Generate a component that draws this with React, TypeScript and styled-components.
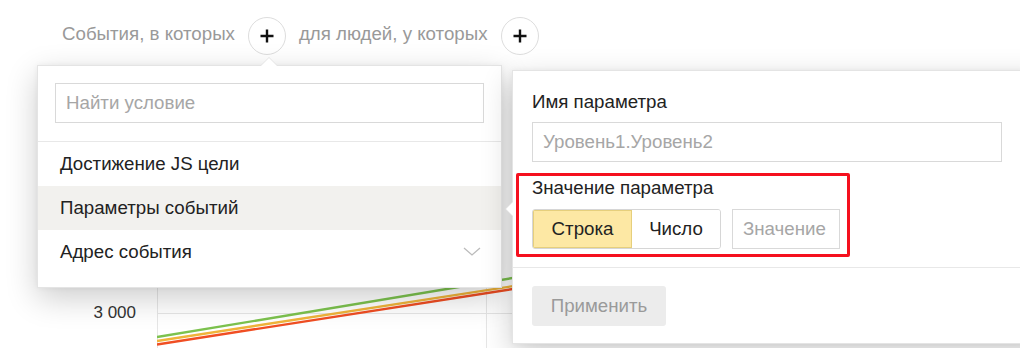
import React from "react";
import styled, { createGlobalStyle } from "styled-components";

const Global = createGlobalStyle`
  html, body { margin: 0; padding: 0; background: #fff; }
  body { font-family: "Liberation Sans", Arial, sans-serif; color: #222; }
  * { box-sizing: border-box; }
`;

const FS = "18.7px";

const Page = styled.div`
  position: relative;
  width: 1020px;
  height: 348px;
  overflow: hidden;
  background: #fff;
`;

const FilterRow = styled.div`
  display: flex;
  align-items: center;
  gap: 13px;
  height: 70px;
  padding-left: 62px;
`;

const FilterText = styled.span`
  font-size: ${FS};
  color: #999;
  margin-top: -3px;
`;

const PlusButton = styled.button`
  width: 38px;
  height: 38px;
  border-radius: 50%;
  border: 1px solid #ddd;
  background: #fff;
  display: flex;
  align-items: center;
  justify-content: center;
  padding: 0;
  margin-top: 1px;
`;

const ChartArea = styled.div`
  display: flex;
  height: 278px;
`;

const YAxis = styled.div`
  width: 157px;
  padding-top: 233px;
  padding-right: 21px;
  text-align: right;
  font-size: 17px;
  color: #333;
`;

const Plot = styled.svg`
  display: block;
  flex: 1;
  height: 278px;
`;

const Popover = styled.div`
  position: absolute;
  background: #fff;
  border: 1px solid #e4e4e4;
  box-shadow: 0 10px 30px rgba(0, 0, 0, 0.2), 0 0 6px rgba(0, 0, 0, 0.05);
`;

const ConditionsPopover = styled(Popover)`
  left: 37px;
  top: 65px;
  width: 465px;
  padding-bottom: 13px;
  &::before,
  &::after {
    content: "";
    position: absolute;
    left: 222px;
    border: 9px solid transparent;
    border-top: 0;
  }
  &::before {
    top: -9px;
    border-bottom-color: #e4e4e4;
  }
  &::after {
    top: -8px;
    border-bottom-color: #fff;
  }
`;

const SearchBox = styled.div`
  padding: 17px 17px 18px 17px;
  border-bottom: 1px solid #e8e8e8;
`;

const TextField = styled.div<{ $w?: number }>`
  height: 40px;
  border: 1px solid #d9d9d9;
  display: flex;
  align-items: center;
  padding-left: 10px;
  font-size: ${FS};
  color: #a6a6a6;
  white-space: nowrap;
  ${(p) => (p.$w ? `width: ${p.$w}px;` : "")}
`;

const Item = styled.div<{ $active?: boolean }>`
  height: 44px;
  display: flex;
  align-items: center;
  justify-content: space-between;
  padding: 0 20px 0 22px;
  font-size: ${FS};
  color: #222;
  background: ${(p) => (p.$active ? "#f2f1ee" : "#fff")};
`;

const ParamPopover = styled(Popover)`
  left: 512px;
  top: 70px;
  width: 540px;
  &::before,
  &::after {
    content: "";
    position: absolute;
    top: 130px;
    border: 8px solid transparent;
    border-left: 0;
  }
  &::before {
    left: -8px;
    border-right-color: #e0e0e0;
  }
  &::after {
    left: -7px;
    border-right-color: #fff;
  }
`;

const ParamBody = styled.div`
  padding: 21px 20px 10px 19px;
  border-bottom: 1px solid #e8e8e8;
`;

const Label = styled.div`
  font-size: ${FS};
  line-height: 20px;
  color: #222;
`;

const NameField = styled(TextField)`
  width: 470px;
  margin-top: 10px;
`;

const Highlight = styled.div`
  display: inline-flex;
  flex-direction: column;
  gap: 11px;
  margin: 11px 0 0 -16px;
  padding: 2px 7px 5px 13px;
  border: 3px solid #f5101e;
  border-radius: 2px;
`;

const Controls = styled.div`
  display: flex;
  gap: 11px;
`;

const Segmented = styled.div`
  display: flex;
  border: 1px solid #d6d6d6;
  border-radius: 3px;
  overflow: hidden;
`;

const Segment = styled.div<{ $on?: boolean; $w: number }>`
  width: ${(p) => p.$w}px;
  height: 38px;
  display: flex;
  align-items: center;
  justify-content: center;
  font-size: ${FS};
  color: #222;
  background: ${(p) => (p.$on ? "#fde8a4" : "#fff")};
  box-shadow: ${(p) => (p.$on ? "inset 0 0 0 1px #e6cf7c" : "none")};
`;

const Footer = styled.div`
  padding: 18px 19px 17px;
`;

const ApplyButton = styled.button`
  width: 134px;
  height: 40px;
  border: 0;
  border-radius: 3px;
  background: #ececec;
  color: #9a9a9a;
  font-family: inherit;
  font-size: ${FS};
`;

const Plus = () => (
  <svg width="16" height="16" viewBox="0 0 16 16">
    <path d="M8 1.5v13M1.5 8h13" stroke="#111" strokeWidth="2.4" />
  </svg>
);

const Chevron = () => (
  <svg width="18" height="10" viewBox="0 0 18 10">
    <path d="M1 1l8 7 8-7" fill="none" stroke="#bbb" strokeWidth="1.3" />
  </svg>
);

export default function App() {
  return (
    <Page>
      <Global />
      <FilterRow>
        <FilterText>События, в которых</FilterText>
        <PlusButton>
          <Plus />
        </PlusButton>
        <FilterText>для людей, у которых</FilterText>
        <PlusButton>
          <Plus />
        </PlusButton>
      </FilterRow>

      <ChartArea>
        <YAxis>3 000</YAxis>
        <Plot viewBox="0 0 863 278" preserveAspectRatio="none">
          <line x1="0.5" y1="0" x2="0.5" y2="278" stroke="#e6e6e6" />
          <line x1="329.5" y1="0" x2="329.5" y2="278" stroke="#e6e6e6" />
          <line x1="0" y1="243.5" x2="863" y2="243.5" stroke="#e6e6e6" />
          <line x1="0" y1="267" x2="863" y2="124" stroke="#7cc24e" strokeWidth="2.4" />
          <line x1="0" y1="271" x2="863" y2="138" stroke="#f0b43a" strokeWidth="2.4" />
          <line x1="0" y1="274.5" x2="863" y2="140" stroke="#f04e23" strokeWidth="2.4" />
        </Plot>
      </ChartArea>

      <ConditionsPopover>
        <SearchBox>
          <TextField>Найти условие</TextField>
        </SearchBox>
        <Item>Достижение JS цели</Item>
        <Item $active>Параметры событий</Item>
        <Item>
          Адрес события
          <Chevron />
        </Item>
      </ConditionsPopover>

      <ParamPopover>
        <ParamBody>
          <Label>Имя параметра</Label>
          <NameField>Уровень1.Уровень2</NameField>
          <Highlight>
            <Label>Значение параметра</Label>
            <Controls>
              <Segmented>
                <Segment $on $w={99}>
                  Строка
                </Segment>
                <Segment $w={88}>Число</Segment>
              </Segmented>
              <TextField $w={108}>Значение</TextField>
            </Controls>
          </Highlight>
        </ParamBody>
        <Footer>
          <ApplyButton>Применить</ApplyButton>
        </Footer>
      </ParamPopover>
    </Page>
  );
}
